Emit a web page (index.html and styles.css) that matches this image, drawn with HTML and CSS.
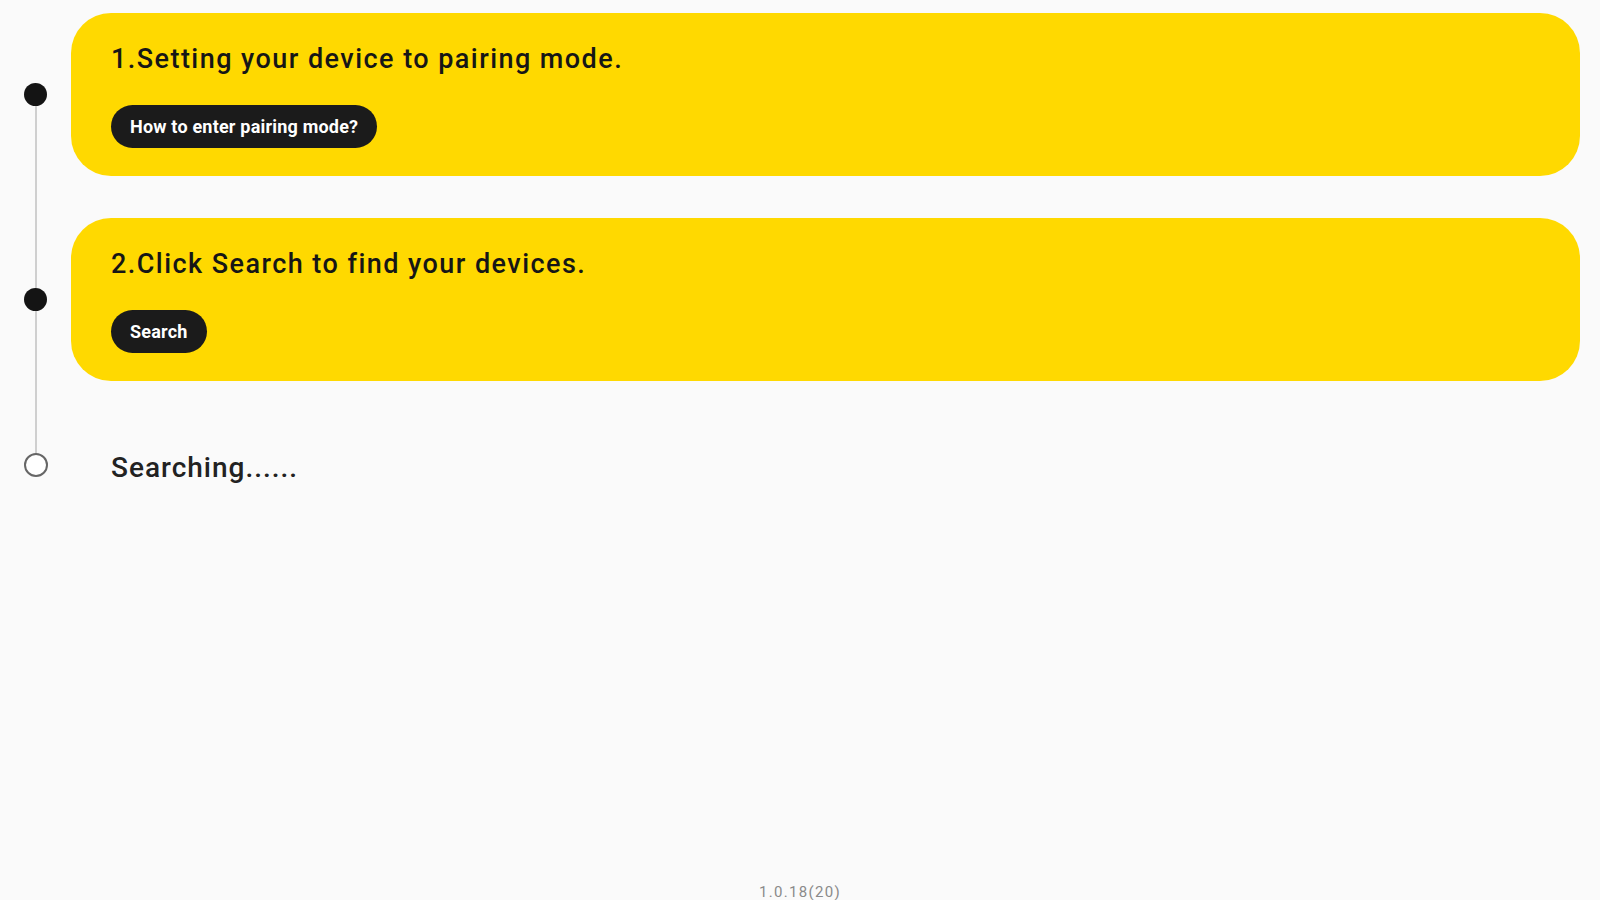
FILE: index.html
```html
<!DOCTYPE html>
<html>
<head>
<meta charset="utf-8">
<link rel="stylesheet" href="styles.css">
</head>
<body>
<div class="page">
  <div class="steps">
    <div class="step step-first">
      <div class="marker"><span class="seg seg-top"></span><span class="dot"></span><span class="seg"></span></div>
      <div class="content">
        <div class="card">
          <div class="title">1.Setting your device to pairing mode.</div>
          <button class="pill">How to enter pairing mode?</button>
        </div>
      </div>
    </div>
    <div class="step">
      <div class="marker"><span class="seg"></span><span class="dot"></span><span class="seg"></span></div>
      <div class="content">
        <div class="card">
          <div class="title">2.Click Search to find your devices.</div>
          <button class="pill">Search</button>
        </div>
      </div>
    </div>
    <div class="step step-last">
      <div class="marker"><span class="seg"></span><span class="dot ring"></span><span class="seg seg-bottom"></span></div>
      <div class="content">
        <div class="status">Searching......</div>
      </div>
    </div>
  </div>
  <div class="version">1.0.18(20)</div>
</div>
</body>
</html>
```

FILE: styles.css
```css
* { box-sizing: border-box; }
html, body { margin: 0; padding: 0; }
body {
  background: #fafafa;
  font-family: Roboto, "Liberation Sans", sans-serif;
  color: #141414;
}
.page {
  min-height: 100vh;
  display: flex;
  flex-direction: column;
}
.steps {
  display: flex;
  flex-direction: column;
  margin-top: -8px;
}
.step {
  display: grid;
  grid-template-columns: 71px 1fr;
}
.marker {
  display: flex;
  flex-direction: column;
  align-items: center;
}
.seg {
  flex: 1;
  width: 2px;
  background: #cfcfcf;
}
.seg-top, .seg-bottom { background: transparent; }
.dot {
  width: 23px;
  height: 23px;
  border-radius: 50%;
  background: #141414;
  flex: none;
}
.ring {
  background: #fff;
  border: 2px solid #666;
  width: 24px;
  height: 24px;
  margin-top: -6px;
}
.content {
  padding: 21px 20px 21px 0;
}
.card {
  background: #ffd900;
  border-radius: 40px;
  height: 163px;
  padding: 30px 40px 0;
}
.title {
  font-size: 27px;
  line-height: 32px;
  font-weight: 500;
  color: #161616;
  letter-spacing: 1.45px;
}
.pill {
  margin-top: 30px;
  height: 43px;
  padding: 0 19px;
  border: none;
  border-radius: 22px;
  background: #1b1b1b;
  color: #fff;
  font-family: Roboto, "Liberation Sans", sans-serif;
  font-weight: 700;
  font-size: 18px;
  letter-spacing: 0.2px;
  cursor: pointer;
}
.step-last .content {
  padding: 46px 20px 46px 40px;
}
.status {
  font-size: 28px;
  line-height: 40px;
  font-weight: 500;
  color: #222;
  letter-spacing: 1px;
}
.version {
  margin-top: auto;
  text-align: center;
  font-size: 15px;
  line-height: 16px;
  color: #8a8a8a;
  letter-spacing: 1.3px;
}
```
